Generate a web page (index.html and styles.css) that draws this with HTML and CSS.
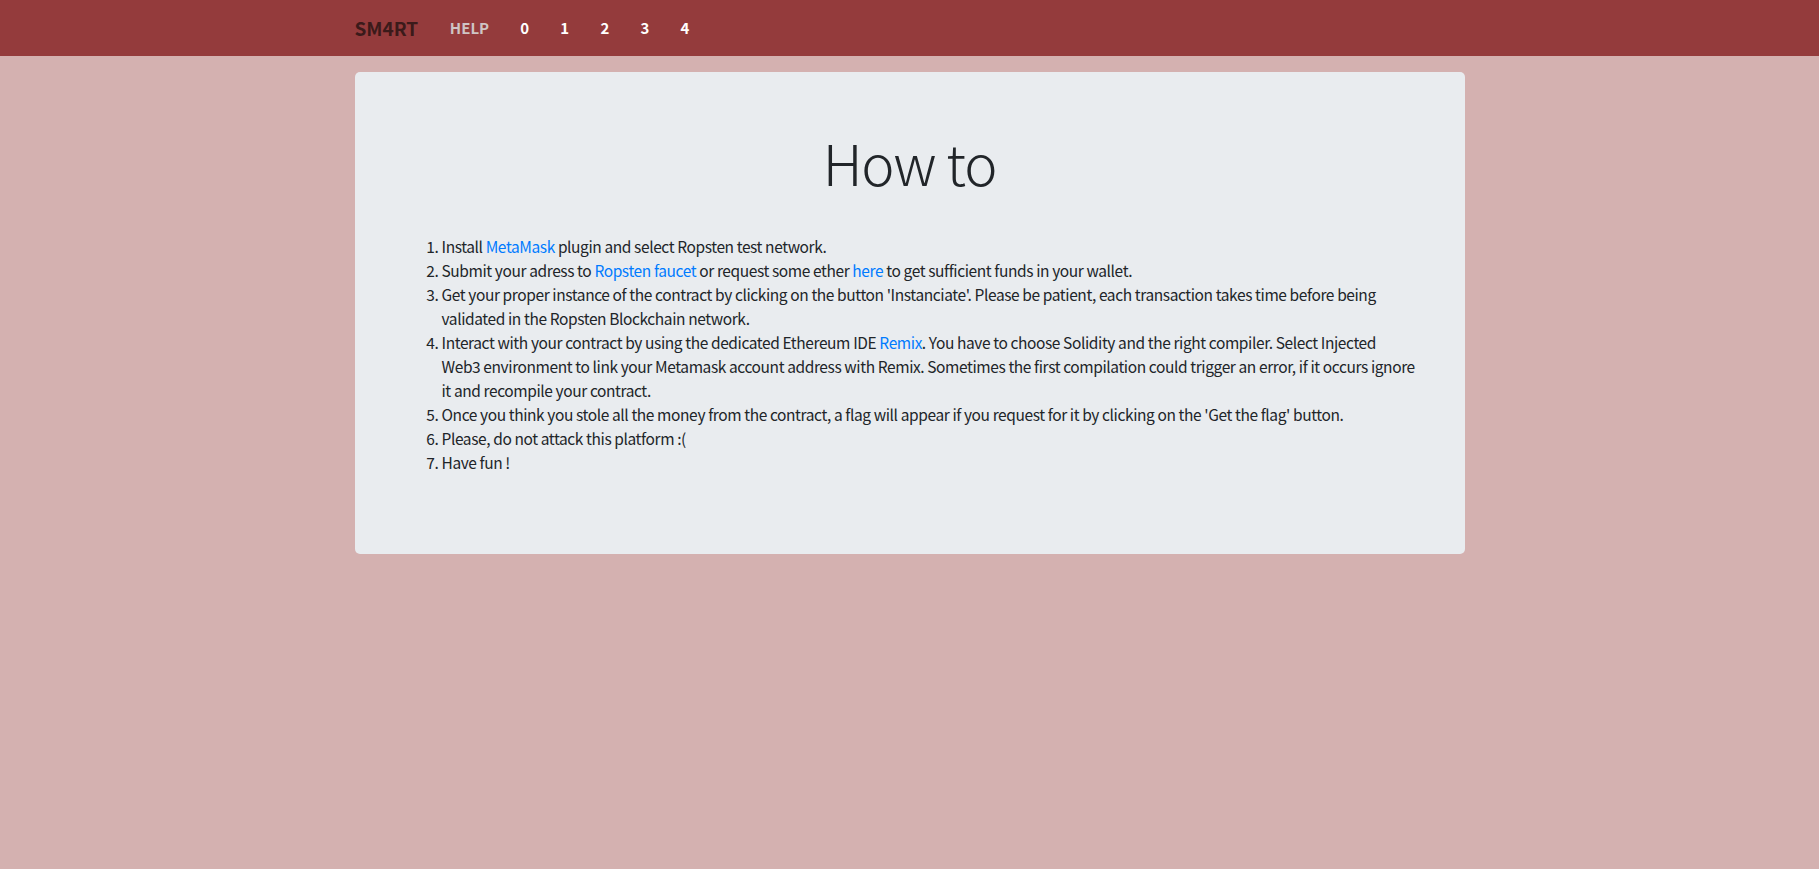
FILE: index.html
```html
<!DOCTYPE html>
<html lang="en">
<head>
<meta charset="utf-8">
<title>SM4RT - How to</title>
<link rel="stylesheet" href="styles.css">
</head>
<body>
<nav class="navbar">
  <div class="container nav-inner">
    <a class="brand" href="#">SM4RT</a>
    <ul class="nav">
      <li><a class="nav-link help" href="#">HELP</a></li>
      <li><a class="nav-link" href="#">0</a></li>
      <li><a class="nav-link" href="#">1</a></li>
      <li><a class="nav-link" href="#">2</a></li>
      <li><a class="nav-link" href="#">3</a></li>
      <li><a class="nav-link" href="#">4</a></li>
    </ul>
  </div>
</nav>
<main class="container">
  <section class="jumbotron">
    <h1 class="title">How to</h1>
    <div class="row">
      <ol class="steps">
        <li>Install <a href="#">MetaMask</a> plugin and select Ropsten test network.</li>
        <li>Submit your adress to <a href="#">Ropsten faucet</a> or request some ether <a href="#">here</a> to get sufficient funds in your wallet.</li>
        <li>Get your proper instance of the contract by clicking on the button 'Instanciate'. Please be patient, each transaction takes time before being validated in the Ropsten Blockchain network.</li>
        <li>Interact with your contract by using the dedicated Ethereum IDE <a href="#">Remix</a>. You have to choose Solidity and the right compiler. Select Injected Web3 environment to link your Metamask account address with Remix. Sometimes the first compilation could trigger an error, if it occurs ignore it and recompile your contract.</li>
        <li>Once you think you stole all the money from the contract, a flag will appear if you request for it by clicking on the 'Get the flag' button.</li>
        <li>Please, do not attack this platform :(</li>
        <li>Have fun !</li>
      </ol>
    </div>
  </section>
</main>
</body>
</html>
```
FILE: styles.css
```css
* { box-sizing: border-box; }
html, body {
  margin: 0;
  padding: 0;
}
body {
  background: #d4b1b0;
  color: #212529;
  font-family: "Noto Sans CJK KR", "Noto Sans", "Liberation Sans", sans-serif;
  font-size: 16px;
  line-height: 24px;
}
a { text-decoration: none; }
.container {
  width: 1140px;
  margin: 0 auto;
  padding: 0 15px;
}
.navbar {
  background: #943b3c;
  height: 56px;
}
.nav-inner {
  display: flex;
  align-items: center;
  height: 56px;
}
.brand {
  color: #3b1a1a;
  font-size: 19px;
  font-weight: 700;
  margin-right: 16px;
  line-height: 30px;
}
.nav {
  display: flex;
  list-style: none;
  margin: 0;
  padding: 0;
}
.nav-link {
  display: block;
  padding: 8px 15.6px;
  color: #ffffff;
  font-size: 15px;
  font-weight: 700;
  line-height: 22px;
}
.nav-link.help {
  color: #cfc5c5;
}
.jumbotron {
  margin-top: 16px;
  background: #e9ecef;
  border-radius: 5px;
  padding: 56px 32px 64px;
}
.title {
  margin: 0 0 39px;
  text-align: center;
  font-size: 56px;
  font-weight: 300;
  line-height: 67px;
  letter-spacing: -1.2px;
}
.row {
  padding: 0 15px;
}
.steps {
  margin: 0 0 16px;
  padding-left: 40px;
  font-size: 15.5px;
  letter-spacing: -0.4px;
}
.steps a { color: #007bff; }
```
